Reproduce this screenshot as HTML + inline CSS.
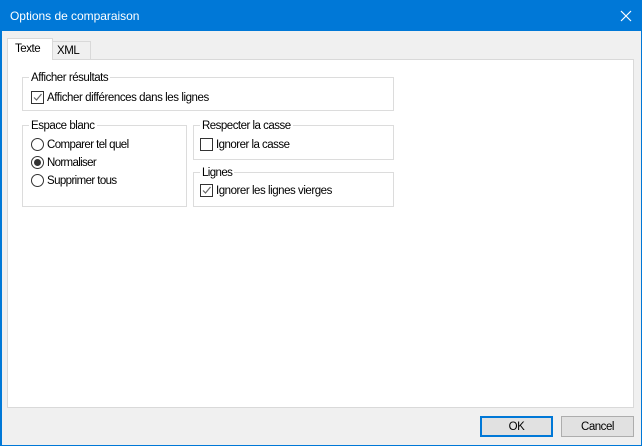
<!DOCTYPE html>
<html><head><meta charset="utf-8"><style>
html,body{margin:0;padding:0}
body{width:642px;height:446px;overflow:hidden;position:relative;background:#f0f0f0;font-family:"Liberation Sans",sans-serif;font-size:11.5px;letter-spacing:-.46px;color:#000}
.a{position:absolute;box-sizing:border-box}
.t{position:absolute;white-space:nowrap;line-height:14px;height:14px}
.g{position:absolute;box-sizing:border-box;border:1px solid #dcdcdc}
.l{position:absolute;white-space:nowrap;line-height:14px;height:14px;background:#fff;padding:0 2px}
.c{position:absolute;box-sizing:border-box;width:13px;height:13px;border:1px solid #333;background:#fff}
.r{position:absolute;box-sizing:border-box;width:13px;height:13px;border:1px solid #333;background:#fff;border-radius:50%}
.b{position:absolute;box-sizing:border-box;width:73px;height:21px;background:#e1e1e1;text-align:center;line-height:21px}
</style></head><body>
<div class="a" style="left:0;top:0;width:642px;height:446px;border:1px solid #0078d7;border-width:0 1px 1px 2px"></div>
<div class="a" style="left:0;top:0;width:642px;height:31px;background:#0078d7"></div>
<div class="t" style="left:10px;top:9px;color:#fff;font-size:12px;letter-spacing:-.03px">Options de comparaison</div>
<svg class="a" style="left:620px;top:10px" width="12" height="12" viewBox="0 0 12 12"><path d="M1 1L11 11M11 1L1 11" stroke="#fff" stroke-width="1.2" fill="none"/></svg>

<div class="a" style="left:7px;top:59px;width:627px;height:349px;background:#fff;border:1px solid #d9d9d9"></div>
<div class="a" style="left:52px;top:41px;width:39px;height:19px;background:#f0f0f0;border:1px solid #d9d9d9"></div>
<div class="t" style="left:57px;top:44px">XML</div>
<div class="a" style="left:7px;top:38px;width:46px;height:22px;background:#fff;border:1px solid #d9d9d9;border-bottom:0"></div>
<div class="t" style="left:15px;top:42px">Texte</div>

<div class="g" style="left:22px;top:77px;width:372px;height:34px"></div>
<div class="l" style="left:29px;top:71px">Afficher résultats</div>
<div class="c" style="left:31px;top:91px"></div>
<svg class="a" style="left:31px;top:91px" width="13" height="13"><path d="M3 6.5L5.5 9L10.5 3" stroke="#666" stroke-width="1.2" fill="none"/></svg>
<div class="t" style="left:47px;top:91px;letter-spacing:-.43px">Afficher différences dans les lignes</div>

<div class="g" style="left:22px;top:125px;width:165px;height:82px"></div>
<div class="l" style="left:29px;top:119px">Espace blanc</div>
<div class="r" style="left:31px;top:138px"></div>
<div class="t" style="left:47px;top:138px;letter-spacing:-.58px">Comparer tel quel</div>
<div class="r" style="left:31px;top:156px"></div>
<div class="a" style="left:34px;top:159px;width:7px;height:7px;border-radius:50%;background:#333"></div>
<div class="t" style="left:47px;top:156px;letter-spacing:-.66px">Normaliser</div>
<div class="r" style="left:31px;top:174px"></div>
<div class="t" style="left:47px;top:174px;letter-spacing:-.6px">Supprimer tous</div>

<div class="g" style="left:193px;top:125px;width:201px;height:35px"></div>
<div class="l" style="left:200px;top:119px;letter-spacing:-.51px">Respecter la casse</div>
<div class="c" style="left:200px;top:138px"></div>
<div class="t" style="left:216px;top:138px;letter-spacing:-.52px">Ignorer la casse</div>

<div class="g" style="left:193px;top:172px;width:201px;height:35px"></div>
<div class="l" style="left:200px;top:166px;letter-spacing:-.6px">Lignes</div>
<div class="c" style="left:200px;top:184px"></div>
<svg class="a" style="left:200px;top:184px" width="13" height="13"><path d="M3 6.5L5.5 9L10.5 3" stroke="#666" stroke-width="1.2" fill="none"/></svg>
<div class="t" style="left:216px;top:184px">Ignorer les lignes vierges</div>

<div class="b" style="left:480px;top:416px;border:2px solid #0078d7;line-height:18px">OK</div>
<div class="b" style="left:561px;top:416px;border:1px solid #adadad;line-height:20px">Cancel</div>
</body></html>
